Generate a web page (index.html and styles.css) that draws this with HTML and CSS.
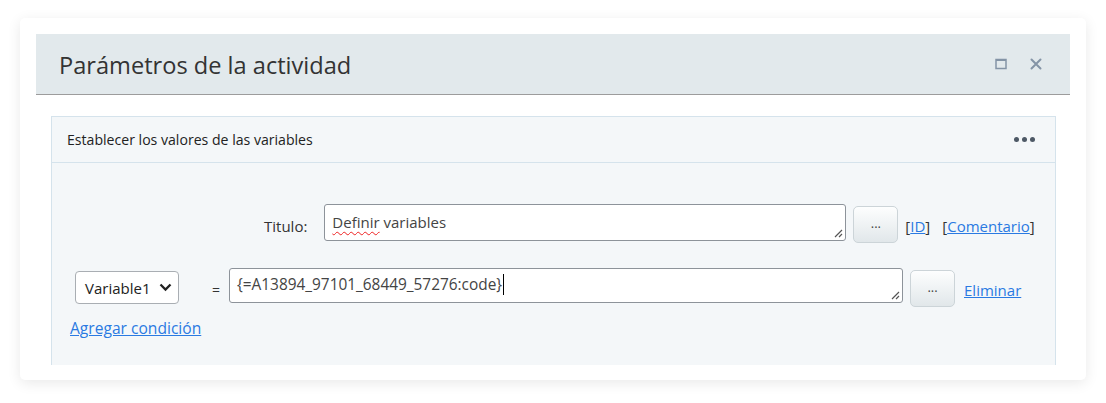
FILE: index.html
```html
<!DOCTYPE html>
<html lang="es">
<head>
<meta charset="utf-8">
<title>Parámetros de la actividad</title>
<link rel="stylesheet" href="styles.css">
</head>
<body>
<div class="page">
  <div class="card">
    <div class="dlg-header">
      <h1 class="dlg-title">Parámetros de la actividad</h1>
      <div class="dlg-tools">
        <svg class="ico" width="12" height="12" viewBox="0 0 12 12"><rect x="1" y="1.5" width="10" height="9" fill="none" stroke="#8494a6" stroke-width="1.5"/><line x1="1" y1="2" x2="11" y2="2" stroke="#8494a6" stroke-width="2"/></svg>
        <svg class="ico close" width="12" height="12" viewBox="0 0 12 12"><path d="M1.5 1.5 L10.5 10.5 M10.5 1.5 L1.5 10.5" stroke="#8494a6" stroke-width="2" stroke-linecap="round"/></svg>
      </div>
    </div>
    <div class="dlg-body">
      <div class="panel">
        <div class="panel-header">
          <span class="panel-title">Establecer los valores de las variables</span>
          <span class="dots"><i></i><i></i><i></i></span>
        </div>
        <div class="panel-body">
          <div class="row row-title">
            <label class="lbl">Titulo:</label>
            <div class="field field-title"><span class="spell">Definir</span> variables<svg class="grip" width="10" height="10" viewBox="0 0 10 10"><path d="M9 2 L2 9 M9 6 L6 9" stroke="#555" stroke-width="1.2"/></svg></div>
            <button class="btn">...</button>
            <span class="links">[<a href="#">ID</a>]</span>
            <span class="links links-c">[<a href="#">Comentario</a>]</span>
          </div>
          <div class="row row-var">
            <div class="select">Variable1<svg width="13" height="9" viewBox="0 0 13 9"><path d="M1.5 1.5 L6.5 6.5 L11.5 1.5" fill="none" stroke="#222" stroke-width="2.3"/></svg></div>
            <span class="eq">=</span>
            <div class="field field-expr"><span class="caret">{=A13894_97101_68449_57276:code}</span><svg class="grip" width="10" height="10" viewBox="0 0 10 10"><path d="M9 2 L2 9 M9 6 L6 9" stroke="#555" stroke-width="1.2"/></svg></div>
            <button class="btn btn2">...</button>
            <a href="#" class="del">Eliminar</a>
          </div>
          <div class="row row-add">
            <a href="#" class="add">Agregar condición</a>
          </div>
        </div>
      </div>
    </div>
  </div>
</div>
</body>
</html>
```
FILE: styles.css
```css
html, body { margin: 0; padding: 0; background: #fff; }
body { font-family: "Open Sans", "Noto Sans", sans-serif; color: #333; }
.page { padding: 18px 20px 23px 20px; }
.card {
  background: #fff;
  border-radius: 5px;
  box-shadow: 0 3px 14px rgba(0,0,0,0.09);
  padding: 16px 16px 15px 16px;
  height: 331px;
  box-sizing: content-box;
  overflow: hidden;
}
.dlg-header {
  height: 60px;
  background: #e2e9ec;
  border-bottom: 1px solid #9c9c9c;
  display: flex;
  align-items: center;
  padding: 0 28px 0 23px;
}
.dlg-title {
  margin: 2px 0 0 0;
  font-weight: 400;
  font-size: 23.6px;
  color: #333;
  flex: 1;
}
.dlg-tools { display: flex; align-items: center; gap: 23px; }
.ico { display: block; }
.dlg-body { padding: 21px 14px 0 15px; }
.panel {
  background: #f4f7f9;
  border: 1px solid #d5e3ec;
  border-bottom: none;
  height: 249px;
  box-sizing: border-box;
}
.panel-header {
  height: 45px;
  border-bottom: 1px solid #d5e3ec;
  display: flex;
  align-items: center;
  padding: 0 20px 0 15px;
}
.panel-title { flex: 1; font-size: 14.1px; color: #222; }
.dots { display: flex; gap: 3px; }
.dots i { width: 5px; height: 5px; border-radius: 50%; background: #4d5966; display: block; }
.panel-body { padding: 41px 0 0 0; }
.row { display: flex; align-items: flex-start; }
.row-title { padding-left: 212px; }
.lbl { font-size: 15px; line-height: 20px; color: #333; margin: 12px 17px 0 0; }
.field {
  position: relative;
  background: #fff;
  border: 1px solid #8d939a;
  border-radius: 3px;
  box-sizing: border-box;
  color: #444;
  padding: 0 7px;
  line-height: 20px;
  white-space: pre;
}
.field-title { width: 522px; height: 37px; padding-top: 7px; font-size: 15px; }
.field-expr { width: 674px; height: 35px; padding-top: 6px; font-size: 15.4px; }
.spell { text-decoration: underline wavy #e22; text-decoration-thickness: 1px; text-underline-offset: 3px; }
.caret { border-right: 1px solid #000; padding-right: 1px; }
.grip { position: absolute; right: 2px; bottom: 2px; }
.btn {
  margin: 2px 0 0 7px;
  width: 45px;
  height: 37px;
  border: 1px solid #ccd4d8;
  border-radius: 5px;
  background: linear-gradient(#fdfefe, #e1e7ea);
  font-family: inherit;
  font-size: 13px;
  color: #444;
  padding: 0 0 4px 0;
}
.links { font-size: 15px; line-height: 20px; color: #333; margin: 12px 0 0 7px; }
.links-c { margin-left: 12px; }
a { color: #2a7ae2; text-decoration: underline; }
.row-var { padding-left: 23px; margin-top: 25px; }
.select {
  width: 104px;
  height: 33px;
  box-sizing: border-box;
  border: 1px solid #a9aeb3;
  border-radius: 4px;
  background: #fff;
  display: flex;
  align-items: center;
  justify-content: space-between;
  padding: 0 6px 0 9px;
  font-size: 15px;
  color: #222;
  margin-top: 3px;
}
.eq { font-size: 14px; line-height: 20px; color: #333; margin: 12px 9px 0 33px; }
.del { font-size: 15px; line-height: 20px; margin: 12px 0 0 9px; }
.row-add { padding-left: 18px; margin-top: 11px; }
.add { font-size: 15.6px; line-height: 20px; }
```
